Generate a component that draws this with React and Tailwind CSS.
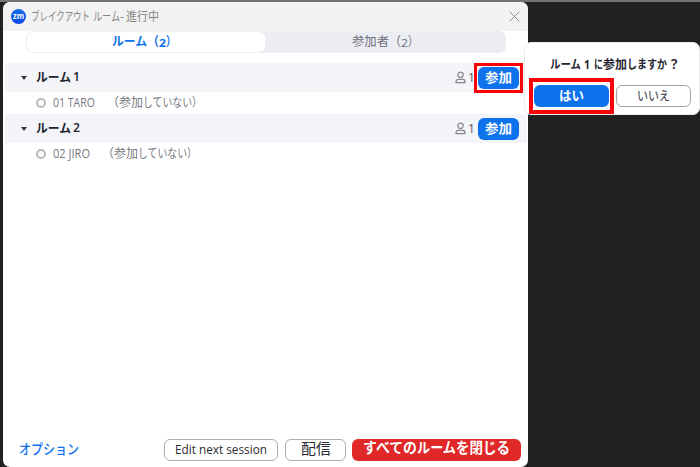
import { useLayoutEffect, useRef } from "react";
import clsx from "clsx";

// Text condensed or widened to the width of its box.
function Fit({ className, children }) {
  const box = useRef(null);
  const inner = useRef(null);
  useLayoutEffect(() => {
    inner.current.style.transform = "none";
    const natural = inner.current.getBoundingClientRect().width;
    const wanted = box.current.getBoundingClientRect().width;
    inner.current.style.transform = `scaleX(${wanted / natural})`;
  }, [children]);
  return (
    <span ref={box} className={clsx("block shrink-0 whitespace-pre", className)}>
      <span ref={inner} className="inline-block origin-left">{children}</span>
    </span>
  );
}

function Person() {
  return (
    <svg className="h-[13px] w-[11px] shrink-0" viewBox="0 0 11 13" fill="none" stroke="#85868f" strokeWidth="1.2">
      <circle cx="5.5" cy="3.8" r="2.7" />
      <path d="M1 11.7v-1.2C1 9 2 8.3 3.3 8.3h4.4C9 8.3 10 9 10 10.5v1.2z" strokeLinejoin="round" />
    </svg>
  );
}

function Room({ number, member, nameWidth, highlighted }) {
  return (
    <section>
      <div className="flex h-[29px] items-center bg-[#f4f5f8] pl-[16px] pr-[8px] text-[#20212b]">
        <svg className="h-[4px] w-[6px]" viewBox="0 0 6 4"><path d="M0 0h6L3 4z" fill="#33343c" /></svg>
        <Fit className="ml-[9px] w-[35px] pt-[1px] text-[12.5px] font-bold">ルーム</Fit>
        <Fit className="ml-[2px] w-[7px] text-[12.5px] font-semibold">{number}</Fit>
        <div className="ml-auto flex items-center">
          <Person />
          <span className="ml-[2px] w-[10px] text-[12px] text-[#555660]">1</span>
          <div className="relative">
            <button className="flex h-[22px] w-[41px] items-center justify-center rounded-[6px] bg-[#0e72ed] pb-[1px] text-[13px] font-bold text-white">
              <Fit className="w-[27px]">参加</Fit>
            </button>
            {highlighted && <div className="absolute -inset-x-[4px] -inset-y-[4px] border-[3px] border-[#fb0007]" />}
          </div>
        </div>
      </div>
      <div className="flex h-[22px] items-center pl-[31px] text-[12px] text-[#777781]">
        <span className="size-[10px] rounded-full border-2 border-[#b9b9bb]" />
        <Fit className={clsx("ml-[7px] text-[12px]", nameWidth)}>{member}</Fit>
        <Fit className="ml-[12px] w-[12px]">（</Fit>
        <Fit className="w-[24px]">参加</Fit>
        <Fit className="w-[49px]">していない</Fit>
        <Fit className="w-[10px]">）</Fit>
      </div>
    </section>
  );
}

export default function App() {
  return (
    <div className="relative flex h-[467px] w-[700px] overflow-hidden border-t-2 border-[#737571] bg-[#212121] pl-[3px] font-[Open_Sans,'Noto_Sans_CJK_JP',sans-serif] leading-none">
      <main className="flex h-[465px] w-[525px] shrink-0 flex-col overflow-hidden rounded-[7px] bg-white">
        <header className="flex h-[29px] shrink-0 items-center bg-[#f2f2f2] pl-[8px] pr-[8px] text-[12px] text-[#858585]">
          <div className="flex size-[15px] items-center justify-center rounded-full bg-linear-to-b from-[#1d6cf0] to-[#0645df]">
            <Fit className="mb-[2px] w-[11px] text-[8px] font-bold text-white">zm</Fit>
          </div>
          <Fit className="ml-[5px] w-[59px]">ブレイクアウト</Fit>
          <Fit className="ml-[3px] w-[27px]">ルーム</Fit>
          <Fit className="w-[4px]">-</Fit>
          <Fit className="ml-[2px] w-[33px]">進行中</Fit>
          <svg className="ml-auto size-[11px]" viewBox="0 0 11 11" stroke="#929292" strokeWidth="1"><path d="M.7.7l9.6 9.6M10.3.7L.7 10.3" /></svg>
        </header>

        <nav className="mx-[23px] flex h-[22px] w-[480px] shrink-0 rounded-[7px] bg-[#ecedf3] text-[12.5px]">
          <button className="flex w-[240px] items-center rounded-[7px] border border-[#eeeef4] bg-white pl-[85px] font-bold text-[#0e72ed]">
            <Fit className="w-[35px]">ルーム</Fit>
            <Fit className="w-[12px]">（</Fit>
            <Fit className="w-[7px] text-[11px]">2</Fit>
            <Fit className="w-[10px]">）</Fit>
          </button>
          <button className="flex flex-1 items-center pl-[86px] text-[#6e6e7b]">
            <Fit className="w-[37px]">参加者</Fit>
            <Fit className="w-[12px]">（</Fit>
            <Fit className="w-[7px] text-[11px]">2</Fit>
            <Fit className="w-[10px]">）</Fit>
          </button>
        </nav>

        <div className="mt-[10px] flex flex-1 flex-col pl-[2px] pr-px">
          <Room number="1" member="01 TARO" nameWidth="w-[42px]" highlighted />
          <Room number="2" member="02 JIRO" nameWidth="w-[37px]" />
        </div>

        <footer className="mb-[6px] flex h-[22px] items-center pl-[16px] text-[#2a2a35]">
          <Fit className="w-[60px] pb-[3px] text-[14px] font-medium text-[#0e72ed]">オプション</Fit>
          <button className="ml-[85px] flex h-[22px] w-[114px] items-center justify-center rounded-[6px] border border-[#aeaeb2]">
            <Fit className="w-[92px] text-[12.5px]">Edit next session</Fit>
          </button>
          <button className="ml-[7px] flex h-[22px] w-[61px] items-center justify-center rounded-[6px] border border-[#aeaeb2] pb-[4px] text-[15px]">
            <Fit className="w-[30px]">配信</Fit>
          </button>
          <button className="ml-[6px] flex h-[22px] w-[169px] items-center justify-center rounded-[6px] bg-[#e02828] pb-[3px] text-[14.5px] font-bold text-white">
            <Fit className="w-[54px]">すべての</Fit>
            <Fit className="w-[39px]">ルーム</Fit>
            <Fit className="w-[54px]">を閉じる</Fit>
          </button>
        </footer>
      </main>

      <aside className="absolute left-[524px] top-[40px] h-[73px] w-[176px] rounded-[7px] border border-[#ededf0] bg-white text-[#242430]">
        <div className="mt-[15px] flex h-[14px] items-center pl-[25px] text-[12px] font-bold">
          <Fit className="w-[31px]">ルーム</Fit>
          <Fit className="ml-[3px] w-[6px]">1</Fit>
          <Fit className="ml-[4px] w-[9px]">に</Fit>
          <Fit className="w-[24px]">参加</Fit>
          <Fit className="w-[40px]">しますか</Fit>
          <Fit className="ml-[1px] w-[12px]">？</Fit>
        </div>
        <div className="mt-[13px] flex gap-[7px] pl-[9px] text-[13px]">
          <div className="relative">
            <button className="flex h-[22px] w-[75px] items-center justify-center rounded-[6px] bg-[#0e72ed] pb-[2px] font-bold text-white">
              <Fit className="w-[25px]">はい</Fit>
            </button>
            <div className="absolute -left-[5px] -right-[5px] -top-[7px] -bottom-[7px] border-4 border-[#fb0007]" />
          </div>
          <button className="flex h-[22px] w-[75px] items-center justify-center rounded-[6px] border border-[#a0a0a4] pb-[2px] text-[#333340]">
            <Fit className="w-[33px]">いいえ</Fit>
          </button>
        </div>
      </aside>
    </div>
  );
}
